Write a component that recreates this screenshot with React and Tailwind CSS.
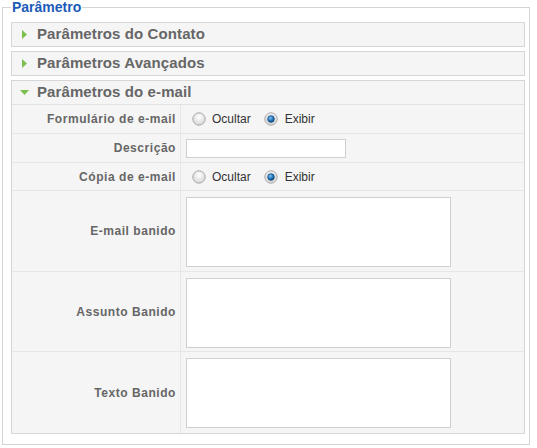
import React from 'react';

const font = { fontFamily: '"Liberation Sans", Arial, sans-serif' };

function Radio({ checked }) {
  return (
    <svg width="14" height="14" viewBox="0 0 14 14" className="shrink-0">
      <defs>
        <radialGradient id={checked ? 'rgOn' : 'rgOff'} cx="50%" cy="35%" r="65%">
          <stop offset="0%" stopColor="#ffffff" />
          <stop offset="100%" stopColor="#d4d4d4" />
        </radialGradient>
        <radialGradient id="dot" cx="40%" cy="35%" r="70%">
          <stop offset="0%" stopColor="#7fc3f2" />
          <stop offset="60%" stopColor="#1f6fb3" />
          <stop offset="100%" stopColor="#0d3f6e" />
        </radialGradient>
      </defs>
      <circle cx="7" cy="7" r="6.2" fill={`url(#${checked ? 'rgOn' : 'rgOff'})`} stroke="#a9a9a9" strokeWidth="1" />
      {checked && <circle cx="7" cy="7" r="3.4" fill="url(#dot)" stroke="#1c4e7c" strokeWidth="0.6" />}
    </svg>
  );
}

function PanelHeader({ title, open }) {
  return (
    <div className="h-[23px] flex items-center pl-[8px] gap-[8px]">
      {open ? (
        <svg width="9" height="9" viewBox="0 0 9 9"><path d="M0 2 L9 2 L4.5 7 Z" fill="#7cbf4c" /></svg>
      ) : (
        <svg width="9" height="9" viewBox="0 0 9 9"><path d="M2 0 L7 4.5 L2 9 Z" fill="#7cbf4c" /></svg>
      )}
      <span className="text-[15px] font-bold text-[#666] tracking-[0.1px]">{title}</span>
    </div>
  );
}

function Row({ label, h, children, area = false, last = false }) {
  return (
    <div className={`flex ${last ? '' : 'border-b border-[#e6e6e6]'}`} style={{ height: h }}>
      <div className="w-[169px] shrink-0 border-r border-[#e6e6e6] flex items-center justify-end pr-[4px] text-[12px] tracking-[0.55px] font-bold text-[#666]">
        {label}
      </div>
      <div className={`flex-1 flex pl-[5px] ${area ? 'items-start pt-[6px]' : 'items-center'}`}>{children}</div>
    </div>
  );
}

function RadioGroup() {
  return (
    <div className="flex items-center text-[12px] text-[#333] pl-[6px]">
      <Radio />
      <span className="ml-[6px]">Ocultar</span>
      <span className="ml-[13px]"><Radio checked /></span>
      <span className="ml-[7px]">Exibir</span>
    </div>
  );
}

function Area() {
  return <div className="w-[265px] h-[70px] bg-white border border-[#cfcfcf]" />;
}

export default function App() {
  return (
    <div className="w-[537px] h-[448px] bg-white" style={font}>
      <fieldset className="ml-[2px] w-[528px] h-[445px] border border-[#d5d5d5] pl-[8px] pr-[4px]">
        <legend className="px-[1px] text-[14px] font-bold text-[#1b5bb8] leading-[15px]">Parâmetro</legend>
        <div className="pt-[7px] flex flex-col gap-[4px]">
          <div className="border border-[#d6d6d6] bg-[#f5f5f5]">
            <PanelHeader title="Parâmetros do Contato" />
          </div>
          <div className="border border-[#d6d6d6] bg-[#f5f5f5]">
            <PanelHeader title="Parâmetros Avançados" />
          </div>
          <div className="border border-[#d6d6d6] bg-[#f5f5f5]">
            <PanelHeader title="Parâmetros do e-mail" open />
            <div className="border-t border-[#e2e2e2]">
              <Row label="Formulário de e-mail" h={29}><RadioGroup /></Row>
              <Row label="Descrição" h={29}>
                <div className="w-[160px] h-[19px] bg-white border border-[#cfcfcf]" />
              </Row>
              <Row label="Cópia de e-mail" h={28}><RadioGroup /></Row>
              <Row label="E-mail banido" h={81} area><Area /></Row>
              <Row label="Assunto Banido" h={80} area><Area /></Row>
              <Row label="Texto Banido" h={81} area last><Area /></Row>
            </div>
          </div>
        </div>
      </fieldset>
    </div>
  );
}
